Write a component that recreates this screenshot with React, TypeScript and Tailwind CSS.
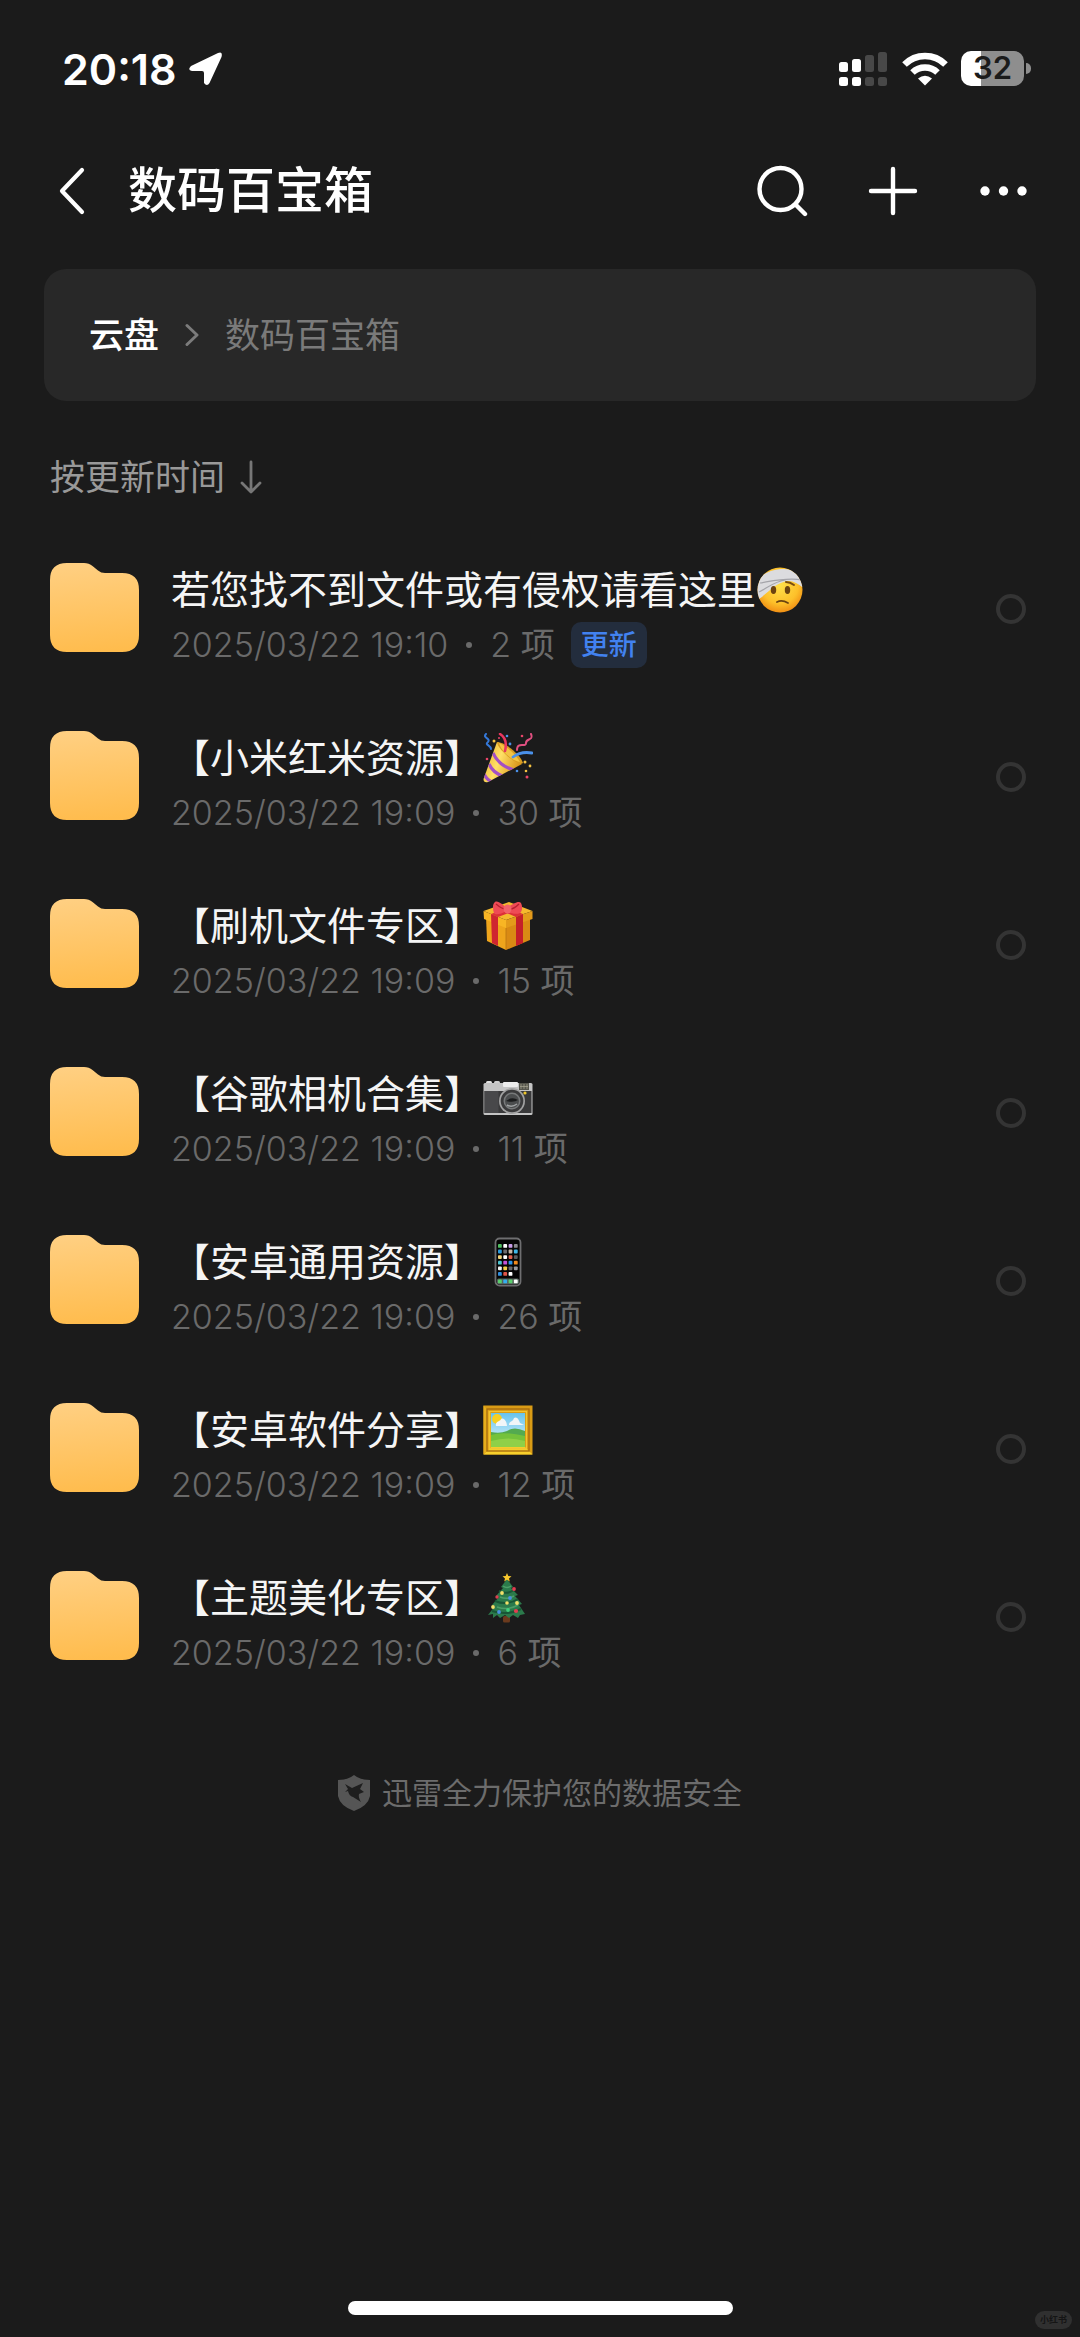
import type { ReactNode } from 'react';

function BandagedFace() {
  return (
    <svg viewBox="0 0 50 50" className="size-[50px]" aria-hidden="true">
      <defs>
        <radialGradient id="faceFill" cx="0.5" cy="0.4" r="0.62">
          <stop offset="0" stopColor="#ffe04a" />
          <stop offset="0.65" stopColor="#fdc02a" />
          <stop offset="1" stopColor="#ef8a12" />
        </radialGradient>
        <clipPath id="faceClip"><circle cx="24" cy="25" r="22.5" /></clipPath>
      </defs>
      <circle cx="24" cy="25" r="22.5" fill="url(#faceFill)" />
      <g clipPath="url(#faceClip)">
        <path d="M0 33V16C7 8 15 5 25 4C37 3 44 8 49 19L46 22C40 17 36 16 31 16C20 18 14 26 3 34Z" fill="#dcdcdf" />
        <path d="M4 18C16 16 32 12 46 15M3 27C10 24 18 16 30 15" stroke="#a5a5aa" strokeWidth="1.2" fill="none" />
      </g>
      <ellipse cx="17.500" cy="25" rx="2.700" ry="4" fill="#6b4310" />
      <ellipse cx="31.500" cy="25" rx="2.700" ry="4" fill="#6b4310" />
      <path d="M30 17Q34 17 38 20" stroke="#7a4d10" strokeWidth="2" fill="none" strokeLinecap="round" />
      <path d="M21 37Q26 34.500 32 38" stroke="#6b4310" strokeWidth="1.800" fill="none" strokeLinecap="round" />
    </svg>
  );
}

function PartyPopper() {
  return (
    <svg viewBox="0 0 50 50" className="size-[50px]" aria-hidden="true">
      <defs>
        <linearGradient id="coneFill" x1="0" y1="0" x2="1" y2="0.4">
          <stop offset="0" stopColor="#e8a91c" />
          <stop offset="0.5" stopColor="#ffe066" />
          <stop offset="1" stopColor="#d9951a" />
        </linearGradient>
        <clipPath id="coneClip"><path d="M14 9L0.500 46Q0.500 50 5 49L39 31Z" /></clipPath>
      </defs>
      <path d="M14 9L0.500 46Q0.500 50 5 49L39 31Z" fill="url(#coneFill)" />
      <g clipPath="url(#coneClip)" stroke="#a350c4" strokeWidth="3.200" fill="none">
        <path d="M10 20Q16 33 31 37" />
        <path d="M6 31Q10 40 20 43" />
        <path d="M1 41Q4 47 9 49" />
      </g>
      <path d="M14 9C22 9 38 22 40 30C35 34 14 16 14 9Z" fill="#d89c22" />
      <path d="M16 10C23 13 33 21 37 29C29 28 18 18 16 10Z" fill="#f3c443" />
      <path d="M17 1Q25 6 22 18" stroke="#e8365f" strokeWidth="2.600" fill="none" strokeLinecap="round" />
      <path d="M30 24Q38 18 49 20" stroke="#4a90e8" strokeWidth="2.800" fill="none" strokeLinecap="round" />
      <path d="M3 1C-1 5 8 5 5 9C1 12 8 12 8 16" stroke="#3478d8" strokeWidth="2" fill="none" strokeLinecap="round" />
      <path d="M48 1C51 8 43 5 43 10C43 15 34 8 34 17" stroke="#e05080" strokeWidth="2" fill="none" strokeLinecap="round" />
      <g fill="#e8456a"><circle cx="4" cy="26" r="1.300" /><circle cx="39" cy="3" r="1.300" /><circle cx="44" cy="44" r="1.500" /><circle cx="16" cy="5" r="1" /></g>
      <g fill="#f5c242"><circle cx="11" cy="8" r="1.500" /><circle cx="42" cy="29" r="1.500" /><circle cx="47" cy="33" r="1.400" /><circle cx="43" cy="38" r="1.300" /></g>
      <g fill="#4a90e8"><circle cx="24" cy="3" r="1.300" /><circle cx="27" cy="11" r="1.400" /><circle cx="34" cy="38" r="1.300" /></g>
    </svg>
  );
}

function Gift() {
  return (
    <svg viewBox="0 0 50 50" className="size-[50px]" aria-hidden="true">
      <path d="M3 15L23 22V49L4 40Z" fill="#efa51c" />
      <path d="M23 22L47 15V39L23 49Z" fill="#d98a14" />
      <path d="M0.500 10L26 1L49.500 10L23 19Z" fill="#f5b92e" />
      <path d="M0.500 10L23 19V27L1 18Z" fill="#f8b524" />
      <path d="M23 19L49.500 10V18L23 27Z" fill="#e39a1a" />
      <path d="M8 13L15 16V45L9 42Z" fill="#cf2530" />
      <path d="M33 16L40 13V42L33 45Z" fill="#c41f29" />
      <path d="M8 13L32 4L39 7L15 16ZM12 7L18 4L40 13L33 16Z" fill="#dc3038" />
      <path d="M23 10C17 14 12 14 11 12C10 9 9 3 12 1C15-1 20 4 24 7C29 3 36-1 38 2C40 6 39 11 37 12C33 14 27 12 23 10Z" fill="#ee4b55" />
      <path d="M13 3Q19 8 22 8M36 3Q31 8 27 8" stroke="#b81f30" strokeWidth="1.400" fill="none" />
      <ellipse cx="24.500" cy="8" rx="4" ry="4.500" fill="#f2626a" />
      <path d="M23 27V49" stroke="#b97510" strokeWidth="0.800" />
    </svg>
  );
}

function Camera() {
  return (
    <svg viewBox="0 0 50 50" className="size-[50px]" aria-hidden="true">
      <rect x="3" y="12" width="6" height="6" rx="1.500" fill="#e2e2e2" />
      <rect x="11" y="12" width="6" height="6" rx="1.500" fill="#cfcfcf" />
      <rect x="0.500" y="14" width="49" height="32" rx="1.500" fill="#c4c4c4" />
      <rect x="20" y="13" width="15" height="5" rx="1" fill="#ececec" />
      <rect x="1.500" y="22" width="47" height="22" fill="#39393a" />
      <rect x="1.500" y="22" width="14" height="22" fill="#48484a" />
      <rect x="36" y="14" width="10" height="7" fill="#55554c" />
      <path d="M38 15V20M41 15V20M44 15V20M37 17.500H45" stroke="#aaa893" strokeWidth="0.700" />
      <circle cx="29" cy="32" r="13" fill="#a2a2a2" />
      <circle cx="29" cy="32" r="11.300" fill="#3a3a3b" />
      <circle cx="29" cy="32" r="8.500" fill="#77797a" />
      <circle cx="29" cy="32" r="7" fill="#4b4d4e" />
      <path d="M23 32Q29 27 35 31Q31 34 23 32" fill="#1b1c1d" />
      <path d="M24 36Q29 39 34 35" stroke="#a0a3a4" strokeWidth="1.500" fill="none" />
      <circle cx="42" cy="24" r="1.600" fill="#edc62c" />
    </svg>
  );
}

const appColors = [
  ['#4fbf60', '#ffffff', '#c79be8', '#8a8a8e'],
  ['#2d9bdc', '#6a6a6e', '#c5b6a8', '#3fb6e8'],
  ['#f2d479', '#ffffff', '#e0604f', '#5c5c60'],
  ['#4cc3cf', '#c453d8', '#2b95e8', '#f08a1d'],
  ['#f4f4f4', '#f0cf4a', '#66666a', '#9a9a9e'],
  ['#2f8fe0', '#e05548', '#ffffff'],
];

function Phone() {
  return (
    <svg viewBox="0 0 50 50" className="size-[50px]" aria-hidden="true">
      <rect x="12.500" y="1.500" width="25" height="47" rx="4" fill="#050505" stroke="#6e6e70" strokeWidth="1.800" />
      {appColors.map((line, r) =>
        line.map((c, i) => (
          <rect key={`${r}-${i}`} x={15 + i * 5.3} y={7 + r * 5.6} width="3.800" height="3.800" rx="0.900" fill={c} />
        )),
      )}
      <rect x="14" y="41.500" width="22" height="5.500" rx="1.500" fill="#55645c" />
      <rect x="15" y="42.500" width="3.800" height="3.800" rx="0.900" fill="#5ad06c" />
      <rect x="20.300" y="42.500" width="3.800" height="3.800" rx="0.900" fill="#35aef0" />
      <rect x="25.600" y="42.500" width="3.800" height="3.800" rx="0.900" fill="#5ad06c" />
      <rect x="30.900" y="42.500" width="3.800" height="3.800" rx="0.900" fill="#ffffff" />
    </svg>
  );
}

function FramedPicture() {
  return (
    <svg viewBox="0 0 50 50" className="size-[50px]" aria-hidden="true">
      <defs>
        <linearGradient id="skyFill" x1="0" y1="0" x2="0" y2="1">
          <stop offset="0" stopColor="#67c3ee" />
          <stop offset="1" stopColor="#e4f6fb" />
        </linearGradient>
      </defs>
      <rect x="0.500" y="0.500" width="49" height="49" fill="#d99b15" />
      <path d="M0.500 49.500L8 42H42L49.500 49.500Z" fill="#f7cf2c" />
      <path d="M0.500 0.500L8 8V42L0.500 49.500Z" fill="#e6ae1c" />
      <rect x="4" y="4" width="42" height="42" fill="none" stroke="#a86d10" strokeWidth="1.400" />
      <rect x="6.500" y="6.500" width="37" height="37" fill="none" stroke="#f3c431" strokeWidth="1.200" />
      <rect x="8" y="8" width="34" height="34" fill="url(#skyFill)" />
      <circle cx="14" cy="14" r="5" fill="#f6d022" />
      <path d="M13 21C12 16 17 17 18 14C21 12 24 17 24 21ZM26 20C26 16 30 17 31 13C34 11 36 15 37 18L41 20Z" fill="#f1f5f8" />
      <path d="M8 27Q17 29 24 26Q31 21 42 26V42H8Z" fill="#53aa50" />
      <path d="M8 30Q20 26 42 31V42H8Z" fill="#74c23c" />
      <path d="M8 36Q25 31 42 36V42H8Z" fill="#8fd048" />
    </svg>
  );
}

function Tree() {
  return (
    <svg viewBox="0 0 50 50" className="size-[50px]" aria-hidden="true">
      <rect x="20" y="43" width="7" height="6.500" rx="1.500" fill="#6b3a1d" />
      <path d="M24 6L30 14L28 15L35 22L32 23L39 31L36 32L42 41L37 42L35 45L30 42L26 45L22 42L17 45L14 42L10 45L10 41L5 42L12 33L9 32L16 24L13 23L20 15L18 14Z" fill="#2b7a4b" />
      <path d="M16 18Q24 22 31 17M12 28Q24 33 35 26M9 38Q24 43 38 36" stroke="#195636" strokeWidth="2" fill="none" />
      <path d="M20 13Q24 16 28 13M17 24Q24 27 31 23M14 34Q25 38 35 32" stroke="#4c9e68" strokeWidth="1.500" fill="none" />
      <path d="M24 0L25.300 3L28.500 3.300L26 5.400L26.800 8.500L24 6.800L21.200 8.500L22 5.400L19.500 3.300L22.700 3Z" fill="#f7c72d" />
      <g fill="#e03e50"><circle cx="31" cy="16" r="1.900" /><circle cx="14" cy="24" r="1.700" /><circle cx="33" cy="38" r="2.100" /></g>
      <g fill="#f2e06a"><circle cx="19" cy="20" r="1.900" /><circle cx="34" cy="30" r="1.900" /><circle cx="10" cy="34" r="1.900" /><circle cx="24" cy="30" r="1.800" /></g>
      <g fill="#4a90e0"><circle cx="27" cy="25" r="1.900" /><circle cx="16" cy="39" r="1.900" /></g>
      <circle cx="25" cy="37" r="1.900" fill="#3fd07c" />
    </svg>
  );
}

function FolderIcon() {
  return (
    <svg viewBox="0 0 89 89" className="size-[89px] shrink-0" aria-hidden="true">
      <defs>
        <linearGradient id="folderFill" x1="0.400" y1="0" x2="0.500" y2="1">
          <stop offset="0" stopColor="#ffcf81" />
          <stop offset="1" stopColor="#ffbc4d" />
        </linearGradient>
      </defs>
      <path d="M17 0H34Q39 0 42.500 3L48 7.500Q51 10 55 10H72Q89 10 89 27V72Q89 89 72 89H17Q0 89 0 72V17Q0 0 17 0Z" fill="url(#folderFill)" />
    </svg>
  );
}

type Folder = { name: string; emoji: ReactNode; time: string; count: number; updated?: boolean };

const folders: Folder[] = [
  { name: '若您找不到文件或有侵权请看这里', emoji: <BandagedFace />, time: '19:10', count: 2, updated: true },
  { name: '【小米红米资源】', emoji: <PartyPopper />, time: '19:09', count: 30 },
  { name: '【刷机文件专区】', emoji: <Gift />, time: '19:09', count: 15 },
  { name: '【谷歌相机合集】', emoji: <Camera />, time: '19:09', count: 11 },
  { name: '【安卓通用资源】', emoji: <Phone />, time: '19:09', count: 26 },
  { name: '【安卓软件分享】', emoji: <FramedPicture />, time: '19:09', count: 12 },
  { name: '【主题美化专区】', emoji: <Tree />, time: '19:09', count: 6 },
];

function FolderRow({ folder }: { folder: Folder }) {
  return (
    <li className="flex h-[168px] items-center pr-[54px] pl-[50px]">
      <button type="button" className="flex min-w-0 flex-1 items-center text-left">
        <FolderIcon />
        <span className="ml-8 flex min-w-0 flex-col pt-[18px]">
          <span className="flex h-[58px] items-center text-[39px] leading-[58px] whitespace-nowrap text-[#f5f5f5]">
            {folder.name}
            {folder.emoji}
          </span>
          <span className="flex h-[52px] items-center text-[34px] leading-[52px] font-light whitespace-nowrap text-[#6a6a6a]">
            <span>2025/03/22 {folder.time}</span>
            <span className="mx-[18px] size-[6px] rounded-full bg-[#6a6a6a]" />
            <span>
              {folder.count} <span className="font-normal">项</span>
            </span>
            {folder.updated && (
              <span className="ml-4 rounded-[10px] bg-[#232d3d] px-[10px] text-[28px] leading-[46px] font-medium text-[#4282f0]">
                更新
              </span>
            )}
          </span>
        </span>
      </button>
      <input
        type="checkbox"
        aria-label={folder.name}
        className="mt-1 size-[30px] shrink-0 appearance-none rounded-full border-[4px] border-[#343434] checked:bg-[#4282f0]"
      />
    </li>
  );
}

function StatusBar() {
  return (
    <div className="flex h-[137px] items-center justify-between pr-[49px] pl-[62px] text-white">
      <div className="flex items-center gap-3">
        <span className="text-[43px] leading-[50px] font-semibold">20:18</span>
        <svg viewBox="0 0 34 34" className="size-[34px]" aria-hidden="true">
          <path d="M2 14L29 1Q34-1 32.500 5L20.500 31Q18 35 15 31V21Q15 19 13 19H3Q-2 18 2 14Z" fill="#fff" />
        </svg>
      </div>
      <div className="flex items-center">
        <svg viewBox="0 0 48 35" className="h-[35px] w-[48px]" aria-hidden="true">
          <g fill="#fff">
            <rect x="0" y="11" width="9" height="10" rx="2.500" />
            <rect x="13" y="8" width="9" height="13" rx="2.500" />
            <rect x="0" y="26" width="9" height="9" rx="2.500" />
            <rect x="13" y="26" width="9" height="9" rx="2.500" />
          </g>
          <g fill="#484848">
            <rect x="26" y="4" width="9" height="17" rx="2.500" />
            <rect x="39" y="1" width="9" height="20" rx="2.500" />
            <rect x="26" y="26" width="9" height="9" rx="2.500" />
            <rect x="39" y="26" width="9" height="9" rx="2.500" />
          </g>
        </svg>
        <svg viewBox="0 0 46 34" className="ml-[15px] h-[34px] w-[46px]" aria-hidden="true">
          <g fill="none" stroke="#fff" strokeWidth="6.500">
            <path d="M2.500 12.500A29 29 0 0 1 43.500 12.500" />
            <path d="M10.500 20.500A18 18 0 0 1 35.500 20.500" />
          </g>
          <path d="M16 26.500Q23 21 30 26.500L23 33.500Z" fill="#fff" />
        </svg>
        <div className="ml-[13px] flex h-[35px] w-[63px] items-center justify-center rounded-[10px] bg-linear-to-r from-white from-32% to-[#8e8e8e] to-32% text-[31px] font-semibold text-[#1b1b1b]">
          32
        </div>
        <div className="ml-[2px] h-[11px] w-[5px] rounded-r-full bg-[#8e8e8e]" />
      </div>
    </div>
  );
}

export default function App() {
  return (
    <div className="relative flex min-h-screen flex-col bg-[#1b1b1b] font-[Inter,'Noto_Sans_CJK_SC',sans-serif]">
      <StatusBar />
      <header className="flex h-[108px] items-center pr-[48px] pl-[59px] text-white">
        <button type="button" aria-label="返回">
          <svg viewBox="0 0 26 48" className="h-[48px] w-[26px]" fill="none" stroke="currentColor" strokeWidth="4.200" strokeLinecap="round" strokeLinejoin="round">
            <path d="M23 3L3 24L23 45" />
          </svg>
        </button>
        <h1 className="ml-[43px] flex-1 text-[49px] leading-[72px] font-medium">数码百宝箱</h1>
        <div className="flex items-center gap-[60px]">
          <button type="button" aria-label="搜索">
            <svg viewBox="0 0 52 52" className="size-[52px]" fill="none" stroke="currentColor" strokeWidth="4.400" strokeLinecap="round">
              <circle cx="24.500" cy="24" r="21" />
              <path d="M40 40L49 49" />
            </svg>
          </button>
          <button type="button" aria-label="新建">
            <svg viewBox="0 0 50 50" className="size-[50px]" stroke="currentColor" strokeWidth="4.400" strokeLinecap="round">
              <path d="M25 3V47M3 25H47" />
            </svg>
          </button>
          <button type="button" aria-label="更多">
            <svg viewBox="0 0 54 50" className="h-[50px] w-[54px]" fill="currentColor">
              <circle cx="7" cy="25" r="4.700" />
              <circle cx="25.500" cy="25" r="4.700" />
              <circle cx="44" cy="25" r="4.700" />
            </svg>
          </button>
        </div>
      </header>

      <nav className="mx-[44px] mt-6 flex h-[132px] items-center rounded-[22px] bg-[#282828] px-[45px] text-[35px] leading-[52px]">
        <a href="#drive" className="font-medium text-white">云盘</a>
        <svg viewBox="0 0 14 24" className="mx-[26px] h-[24px] w-[14px]" fill="none" stroke="#7c7c7c" strokeWidth="3" strokeLinecap="round" strokeLinejoin="round" aria-hidden="true">
          <path d="M2 2.500L12 12L2 21.500" />
        </svg>
        <span className="text-[#7a7a7a]">数码百宝箱</span>
      </nav>

      <div className="mt-[50px] pl-[50px]">
        <button type="button" className="flex items-center gap-[15px] text-[35px] leading-[52px] text-[#999999]">
          按更新时间
          <svg viewBox="0 0 22 34" className="h-[34px] w-[22px]" fill="none" stroke="#777777" strokeWidth="2.800" strokeLinecap="round" strokeLinejoin="round" aria-hidden="true">
            <path d="M11 2V32M2 23L11 32L20 23" />
          </svg>
        </button>
      </div>

      <ul className="mt-5">
        {folders.map((folder) => (
          <FolderRow key={folder.name} folder={folder} />
        ))}
      </ul>

      <div className="mt-[72px] flex items-center justify-center gap-3 text-[30px] leading-[44px] text-[#6c6c6c]">
        <svg viewBox="0 0 32 36" className="h-[36px] w-[32px]" aria-hidden="true">
          <path d="M16 0Q22 5 32 5V21Q30 31 16 36Q2 31 0 21V5Q10 5 16 0Z" fill="#555555" />
          <path d="M7 9L14 13L25 8L22 14L26 17L21 19Q20 22 23 27L15 22Q11 21 10 16L7 17L10 14Z" fill="#1e1e1e" />
        </svg>
        <span>迅雷全力保护您的数据安全</span>
      </div>

      <div className="mt-auto flex justify-center pt-8 pb-[22px]">
        <div className="h-[14px] w-[385px] rounded-full bg-white" />
      </div>
      <span className="absolute right-2 bottom-2 rounded-full bg-[#303030] px-[5px] text-[9px] leading-[18px] font-bold text-[#151515]">
        小红书
      </span>
    </div>
  );
}
